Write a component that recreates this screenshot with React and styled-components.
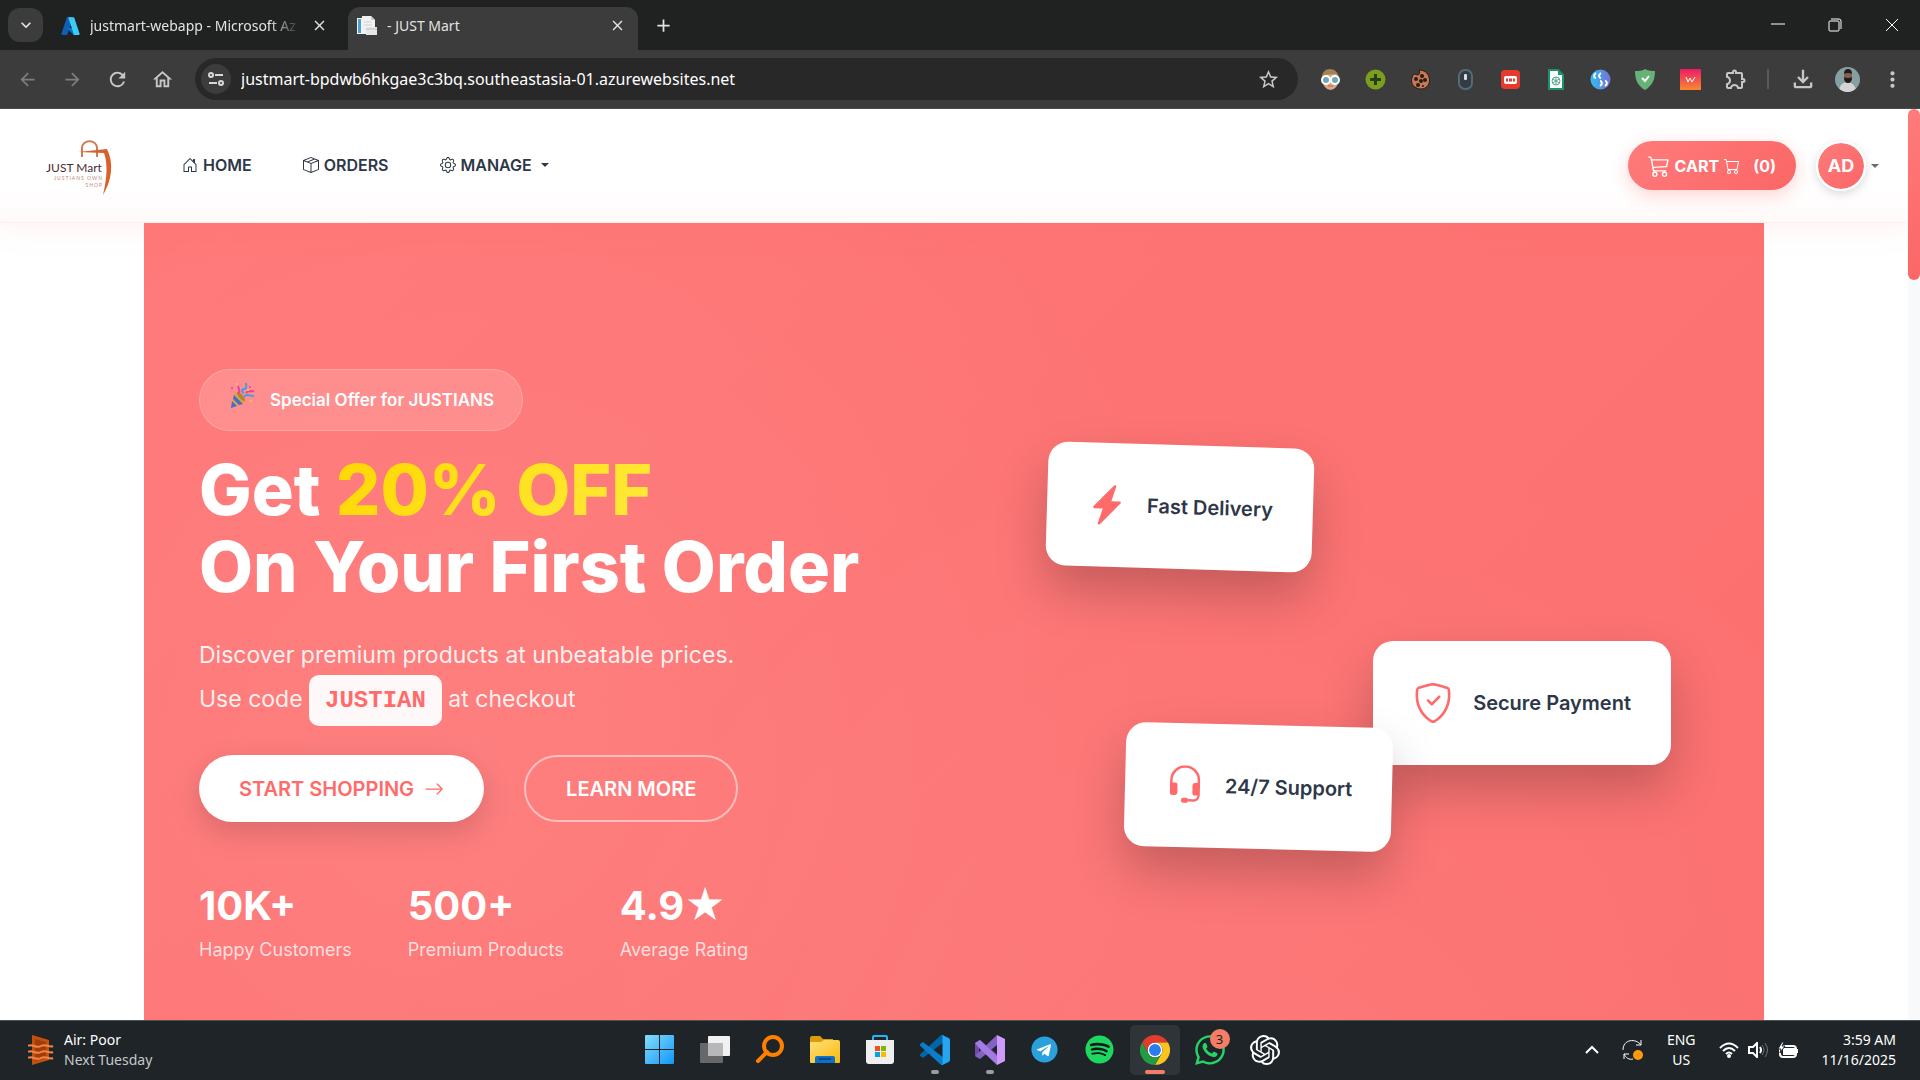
import React from 'react'
import styled, { createGlobalStyle, css } from "styled-components";
import { BsHouseDoor, BsBoxSeam, BsGear, BsCart3, BsCart, BsArrowRight, BsLightningChargeFill, BsShieldCheck, BsHeadset } from "react-icons/bs";
import { FaTelegram, FaWhatsapp, FaSpotify } from "react-icons/fa";
import { SiOpenai } from "react-icons/si";
import { MdArrowBack, MdArrowForward, MdRefresh, MdOutlineHome, MdStarBorder, MdOutlineExtension, MdOutlineFileDownload, MdMoreVert, MdClose, MdAdd, MdKeyboardArrowDown } from "react-icons/md";

const GlobalStyle = createGlobalStyle`
  * {
    box-sizing: border-box;
  }
  body {
    margin: 0;
    background: #fff;
    font-family: Inter, "Liberation Sans", sans-serif;
    overflow: hidden;
  }
  button, input {
    font: inherit;
    color: inherit;
    margin: 0;
    padding: 0;
    border: none;
    background: none;
  }
  a {
    color: inherit;
    text-decoration: none;
  }
  svg {
    display: block;
    flex-shrink: 0;
  }
`;

const AzureIcon = () => (
    <svg width="19" height="19" viewBox="0 0 96 96">
        <path d="M33 6h29L32 93a5 5 0 0 1-4 3H6a5 5 0 0 1-4-6L29 9a5 5 0 0 1 4-3z" fill="#0f5fb4" />
        <path d="M72 61H30l27 27a8 8 0 0 0 5 3h24z" fill="#0078d4" />
        <path d="M67 9a5 5 0 0 0-4-3H33a5 5 0 0 1 4 3l27 81a5 5 0 0 1-4 6h30a5 5 0 0 0 4-6z" fill="#3ccbf4" />
    </svg>
)

const PageIcon = () => (
    <svg width="20" height="20" viewBox="0 0 20 20">
        <path d="M0 2h5v16H0z" fill="#f4f6f8" />
        <path d="M1 3h3v14H1z" fill="#4a9fd0" />
        <path d="M5 0h9l4 4v14H5z" fill="#f1f1f1" />
        <path d="M14 0v4h4z" fill="#c9c9c9" />
        <path d="M7 6h8M7 9h8" stroke="#cfd3d6" />
        <path d="M9 11h11v8H9z" fill="#e4e6e8" />
        <path d="M9 13h11" stroke="#bfc4c8" />
    </svg>
)

const TuneIcon = () => (
    <svg width="18" height="18" viewBox="0 0 18 18" fill="none" stroke="#d8d8d8" strokeWidth="2">
        <circle cx="4" cy="5" r="2" /><path d="M8 5h8" />
        <circle cx="14" cy="13" r="2" /><path d="M2 13h8" />
    </svg>
)

const BarIcon = ({ children }) => <svg width="21" height="21" viewBox="0 0 21 21">{children}</svg>

const extensions = [
    {
        name: 'Glasses', icon: <BarIcon>
            <ellipse cx="10.500" cy="11" rx="8" ry="10" fill="#dba98a" />
            <path d="M2 10C1 3 6 0 10 0s9 3 9 10l-3-5-11 1z" fill="#a38355" />
            <circle cx="6" cy="11" r="4" fill="#6fa9b5" stroke="#fff" strokeWidth="2" />
            <circle cx="15" cy="11" r="4" fill="#6fa9b5" stroke="#fff" strokeWidth="2" />
            <path d="M8 17h5" stroke="#b5654c" />
        </BarIcon>
    },
    {
        name: 'Add', icon: <BarIcon>
            <circle cx="10.500" cy="10.500" r="10" fill="#7a9f1c" />
            <path d="M10.500 5v11M5 10.500h11" stroke="#2d3b12" strokeWidth="3" />
        </BarIcon>
    },
    {
        name: 'Cookies', icon: <BarIcon>
            <path d="M9 1c1 3 1 4-1 5-2 0-3-1-4-1-6 8 0 15 7 15 6 0 10-6 8-12-1-4-5-7-10-7z" fill="#c47a55" stroke="#2a1a14" />
            <g fill="#2a1a14"><circle cx="6" cy="10" r="2" /><circle cx="12" cy="7" r="2" /><circle cx="11" cy="12" r="2" /><circle cx="15" cy="11" r="2" /><circle cx="8" cy="16" r="2" /><circle cx="13" cy="17" r="1" /></g>
        </BarIcon>
    },
    {
        name: 'Mouse', icon: <BarIcon>
            <rect x="4" y="1" width="13" height="19" rx="6" fill="#343b42" stroke="#4f6c7d" strokeWidth="2" />
            <rect x="9" y="5" width="3" height="6" rx="1" fill="#d5dde2" />
        </BarIcon>
    },
    {
        name: 'Recorder', icon: <BarIcon>
            <rect x="1" y="1" width="19" height="19" rx="4" fill="#e8392e" />
            <rect x="4" y="7" width="13" height="8" rx="2" fill="#fff" />
            <path d="M6 11h2M9 11h3M13 11h2" stroke="#e8392e" strokeWidth="3" />
        </BarIcon>
    },
    {
        name: 'Exporter', icon: <BarIcon>
            <path d="M4 1h9l5 5v14H4z" fill="#fff" stroke="#1d9468" strokeWidth="2" />
            <path d="M13 1v5h5z" fill="#1d9468" />
            <g fill="none" stroke="#55a98a"><circle cx="11" cy="12" r="4" /><path d="M8 10l6 4M8 14l6-4M11 8v8" /></g>
        </BarIcon>
    },
    {
        name: 'Quotes', icon: <BarIcon>
            <defs><linearGradient id="quote" x1="0" x2="1"><stop offset="0" stopColor="#2fc0ee" /><stop offset="1" stopColor="#7a6fd8" /></linearGradient></defs>
            <circle cx="10.500" cy="10.500" r="10" fill="url(#quote)" />
            <g fill="none" stroke="#fff" strokeWidth="2"><path d="M6 4c-3 2-2 5 0 5M11 4c-3 2-2 5 0 5M10 17c3-2 2-5 0-5M15 17c3-2 2-5 0-5" /></g>
        </BarIcon>
    },
    {
        name: 'Shield', icon: <BarIcon>
            <path d="M10 0c4 2 7 2 10 2 0 9-3 15-10 19C3 17 0 11 0 2c4 0 7 0 10-2z" fill="#67b279" />
            <path d="M7 9l3 3 4-5" fill="none" stroke="#fff" strokeWidth="2" />
        </BarIcon>
    },
    {
        name: 'Wappalyzer', icon: <BarIcon>
            <defs><linearGradient id="wap" x1="0" x2="0" y1="0" y2="1"><stop offset="0" stopColor="#ef1a68" /><stop offset="1" stopColor="#f88a31" /></linearGradient></defs>
            <path d="M0 0h21v21H0z" fill="url(#wap)" />
            <path d="M6 8l2 5 2-4 2 4 3-5" fill="none" stroke="#fff" />
        </BarIcon>
    },
    { name: 'Extensions', icon: <MdOutlineExtension size={24} color="#c7c7c7" /> },
]

const BrandLogo = () => (
    <svg width="68" height="58" viewBox="0 0 68 58">
        <path d="M36 20v-9c0-9 15-9 15 0v9" fill="none" stroke="#cf7a55" strokeWidth="2" />
        <path d="M32 15l29-3c7 14 5 31-4 46 4-17 5-31 1-42z" fill="#d95f2b" />
        <text x="0" y="35" fontSize="12" fontFamily="Lato, sans-serif" fill="#4d2a30">JUST Mart</text>
        <text x="57" y="43" fontSize="5" letterSpacing="1" textAnchor="end" fontFamily="Lato, sans-serif" fill="#b98a7c">JUSTIANS OWN</text>
        <text x="57" y="50" fontSize="5" letterSpacing="1" textAnchor="end" fontFamily="Lato, sans-serif" fill="#b98a7c">SHOP</text>
    </svg>
)

const PartyIcon = () => (
    <svg width="25" height="26" viewBox="0 0 25 26">
        <path d="M5 9l11 10L1 25z" fill="#e0a43c" />
        <path d="M4 12l9 9-4 1-6-6zM2 18l5 5-6 2z" fill="#3f6fd0" />
        <path d="M7 9c3-1 9 6 8 9-3 1-9-6-8-9z" fill="#b9822f" />
        <g fill="none" strokeWidth="2">
            <path d="M9 11c1-4 0-6-1-8" stroke="#e83fa0" />
            <path d="M14 10c-3-1-2-5 1-4 2 0 1-4 1-6" stroke="#3f9fe8" />
            <path d="M14 14c2-4 5-1 10-1" stroke="#3f9fe8" />
            <path d="M16 10c2-3 5-1 8-2" stroke="#e83fa0" />
        </g>
        <g><circle cx="2" cy="5" r="1" fill="#e83fa0" /><circle cx="20" cy="4" r="1" fill="#e83fa0" /><circle cx="7" cy="1" r="1" fill="#f0c84a" /><circle cx="21" cy="18" r="1" fill="#f0c84a" /><circle cx="18" cy="7" r="1" fill="#f0c84a" /></g>
    </svg>
)

const AirIcon = () => (
    <svg width="26" height="30" viewBox="0 0 26 30">
        <path d="M4 0l17 5v20L4 30z" fill="#c4500e" />
        <path d="M7 4l11 3v16L7 26z" fill="#a23c08" />
        <path d="M0 11c4-3 8 3 13 0s8 2 12 0M0 17c4-3 8 3 13 0s8 2 12 0M0 23c4-3 8 3 13 0s8 2 12 0" fill="none" stroke="#f0844a" strokeWidth="2" />
    </svg>
)

const TaskSvg = ({ children, box = 30 }) => <svg width="30" height="30" viewBox={`0 0 ${box} ${box}`}>{children}</svg>

const tasks = [
    {
        name: 'Start', icon: <TaskSvg>
            <defs><linearGradient id="win" x1="0" y1="0" x2="1" y2="1" ><stop offset="0" stopColor="#86dcfb" /><stop offset="1" stopColor="#1098f7" /></linearGradient></defs>
            <path d="M1 0h13v14H0V1q0-1 1-1zM15 0h13q1 0 1 1v13H15zM0 15h14v14H1q-1 0-1-1zM15 15h14v13q0 1-1 1H15z" fill="url(#win)" />
        </TaskSvg>
    },
    {
        name: 'Task view', icon: <TaskSvg>
            <rect x="8" y="1" width="22" height="20" rx="1" fill="#f1f1f1" />
            <rect x="0" y="8" width="23" height="20" rx="1" fill="#66686a" />
            <path d="M8 8h15v13H8z" fill="#b7b8b9" />
        </TaskSvg>
    },
    {
        name: 'Everything', icon: <TaskSvg>
            <circle cx="18" cy="11" r="9" fill="none" stroke="#ff8000" strokeWidth="4" />
            <path d="M12 17L3 26" stroke="#ff8000" strokeWidth="4" strokeLinecap="round" />
        </TaskSvg>
    },
    {
        name: 'File Explorer', icon: <TaskSvg>
            <defs><linearGradient id="fold" x1="0" y1="0" x2="1" y2="1"><stop offset="0" stopColor="#ffe07a" /><stop offset="1" stopColor="#fbb90d" /></linearGradient></defs>
            <path d="M0 3q0-2 2-2h8l3 3h10v6H0z" fill="#dd9b08" />
            <path d="M0 7h11l3-2h14q2 0 2 2v20q0 1-1 1H1q-1 0-1-1z" fill="url(#fold)" />
            <path d="M5 28v-5q0-2 2-2h16q2 0 2 2v5z" fill="#1070c4" />
            <path d="M9 24h12" stroke="#0b4a8c" strokeWidth="2" />
        </TaskSvg>
    },
    {
        name: 'Microsoft Store', icon: <TaskSvg>
            <path d="M8 7V2q0-1 1-1h12q1 0 1 1v5" fill="none" stroke="#27b5ef" strokeWidth="2" />
            <path d="M1 5h28v21q0 3-3 3H4q-3 0-3-3z" fill="#efefef" />
            <path d="M10 11h5v5h-5z" fill="#f04e23" /><path d="M16 11h5v5h-5z" fill="#7cb900" />
            <path d="M10 17h5v5h-5z" fill="#00a2ed" /><path d="M16 17h5v5h-5z" fill="#fdb800" />
        </TaskSvg>
    },
    {
        name: 'Visual Studio Code', open: true, icon: <TaskSvg box={100}>
            <path d="M96.4614 10.7962L75.8569 0.8755C73.4719 -0.2728 70.6217 0.2116 68.75 2.0833L1.2986 63.5832C-0.5157 65.2373 -0.5136 68.0937 1.3031 69.7452L6.8127 74.7537C8.2979 76.1038 10.5347 76.2032 12.1338 74.9905L93.3609 13.3699C96.086 11.3026 100 13.2462 100 16.6667V16.4275C100 14.0265 98.6246 11.8378 96.4614 10.7962Z" fill="#0065a9" />
            <path d="M96.4614 89.2038L75.8569 99.1245C73.4719 100.273 70.6217 99.7884 68.75 97.9167L1.2986 36.4169C-0.5157 34.7627 -0.5136 31.9063 1.3031 30.2548L6.8127 25.2463C8.2979 23.8962 10.5347 23.7968 12.1338 25.0095L93.3609 86.6301C96.086 88.6974 100 86.7538 100 83.3334V83.5726C100 85.9735 98.6246 88.1622 96.4614 89.2038Z" fill="#0a7dca" />
            <path d="M75.8578 99.1263C73.4721 100.274 70.6219 99.7885 68.75 97.9166C71.0564 100.223 75 98.5895 75 95.3278V4.6721C75 1.4104 71.0564 -0.2231 68.75 2.0833C70.6219 0.2114 73.4721 -0.2737 75.8578 0.8736L96.4587 10.7807C98.6234 11.8217 100 14.0112 100 16.4132V83.5871C100 85.9891 98.6234 88.1786 96.4586 89.2196L75.8578 99.1263Z" fill="#26a5f0" />
        </TaskSvg>
    },
    {
        name: 'Visual Studio', open: true, icon: <TaskSvg>
            <path d="M0 8l5-3 18 15v10L4 13v10l-4-2z" fill="#6c4ba8" />
            <path d="M0 21l5 3L22 10V0L4 17z" fill="#8461c5" />
            <path d="M0 8l5-3 17 16v9L4 13z" fill="#a47be0" />
            <path d="M22 0l8 4v22l-8 4z" fill="#cf9bfa" />
        </TaskSvg>
    },
    { name: 'Telegram', icon: <RoundBack $bg="#fff"><FaTelegram size={27} color="#2aa1dc" /></RoundBack> },
    { name: 'Spotify', icon: <RoundBack $bg="#12181b"><FaSpotify size={29} color="#1ed760" /></RoundBack> },
    {
        name: 'Google Chrome', open: true, active: true, icon: <TaskSvg box={48}>
            <circle cx="24" cy="24" r="12" fill="#fff" />
            <path d="M24,12H44.7812a23.9939,23.9939,0,0,0-41.5639.0029L13.6079,30l.0093-.0024A11.9852,11.9852,0,0,1,24,12Z" fill="#e33b2e" />
            <path d="M34.3913,30.0029,24.0007,48A23.994,23.994,0,0,0,44.78,12.0031H23.9989l-.0025.0093A11.985,11.985,0,0,1,34.3913,30.0029Z" fill="#fcc31e" />
            <path d="M13.6086,30.0031,3.218,12.006A23.994,23.994,0,0,0,24.0025,48L34.3931,30.0029l-.0067-.0068a11.9852,11.9852,0,0,1-20.7778.007Z" fill="#249a43" />
            <circle cx="24" cy="24" r="9.500" fill="#2a7af0" />
        </TaskSvg>
    },
    { name: 'WhatsApp', badge: 3, icon: <FaWhatsapp size={34} color="#25d366" /> },
    { name: 'ChatGPT', icon: <SiOpenai size={30} color="#fff" /> },
]

const stats = [
    { value: '10K+', label: 'Happy Customers' },
    { value: '500+', label: 'Premium Products' },
    { value: '4.9★', label: 'Average Rating' },
]

function App() {
    return (
        <Screen>
            <GlobalStyle />
            <TabStrip>
                <TabSearch aria-label="Search tabs"><MdKeyboardArrowDown size={20} /></TabSearch>
                <Tab>
                    <AzureIcon />
                    <TabTitle $fade>justmart-webapp - Microsoft Az</TabTitle>
                    <TabButton aria-label="Close tab"><MdClose size={17} /></TabButton>
                </Tab>
                <Tab $active>
                    <PageIcon />
                    <TabTitle>- JUST Mart</TabTitle>
                    <TabButton aria-label="Close tab"><MdClose size={17} /></TabButton>
                </Tab>
                <NewTab aria-label="New tab"><MdAdd size={21} /></NewTab>
                <WindowControls>
                    <WindowButton aria-label="Minimize"><svg width="14" height="14"><path d="M0 6h14" stroke="#fff" /></svg></WindowButton>
                    <WindowButton aria-label="Restore">
                        <svg width="14" height="14" fill="none" stroke="#fff"><rect x="1" y="3" width="10" height="10" rx="1" /><path d="M3 1h8q2 0 2 2v8" /></svg>
                    </WindowButton>
                    <WindowButton aria-label="Close"><svg width="14" height="14"><path d="M1 1l12 12M13 1L1 13" stroke="#fff" /></svg></WindowButton>
                </WindowControls>
            </TabStrip>
            <Toolbar>
                <ToolButton $dim aria-label="Back"><MdArrowBack size={21} /></ToolButton>
                <ToolButton $dim aria-label="Forward"><MdArrowForward size={21} /></ToolButton>
                <ToolButton aria-label="Reload"><MdRefresh size={23} /></ToolButton>
                <ToolButton aria-label="Home"><MdOutlineHome size={23} /></ToolButton>
                <AddressBar>
                    <SiteInfo aria-label="Site information"><TuneIcon /></SiteInfo>
                    <Address aria-label="Address" defaultValue="justmart-bpdwb6hkgae3c3bq.southeastasia-01.azurewebsites.net" />
                    <Bookmark aria-label="Bookmark"><MdStarBorder size={23} /></Bookmark>
                </AddressBar>
                <Extensions>
                    {extensions.map((ext) => (
                        <ToolButton key={ext.name} aria-label={ext.name}>{ext.icon}</ToolButton>
                    ))}
                </Extensions>
                <Separator />
                <ToolButton aria-label="Downloads"><MdOutlineFileDownload size={28} /></ToolButton>
                <ToolButton aria-label="Profile">
                    <svg width="25" height="25" viewBox="0 0 25 25">
                        <defs><clipPath id="face"><circle cx="12.500" cy="12.500" r="12.500" /></clipPath></defs>
                        <g clipPath="url(#face)">
                            <path d="M0 0h25v25H0z" fill="#86a0a2" />
                            <path d="M4 25q0-9 8-10 9 1 9 10z" fill="#d5d3d6" />
                            <ellipse cx="13" cy="9" rx="4" ry="6" fill="#8a5f4b" />
                            <path d="M9 7q0-5 4-5t4 5q-4-2-8 0zM9 10q4 2 8 0 0 6-4 6t-4-6z" fill="#211c1b" />
                        </g>
                    </svg>
                </ToolButton>
                <ToolButton aria-label="Menu"><MdMoreVert size={25} /></ToolButton>
            </Toolbar>

            <Viewport>
                <Page>
                    <Navbar>
                        <Brand href="#" aria-label="JUST Mart"><BrandLogo /></Brand>
                        <NavLinks>
                            <NavLink href="#"><BsHouseDoor />HOME</NavLink>
                            <NavLink href="#"><BsBoxSeam />ORDERS</NavLink>
                            <NavLink as="button"><BsGear />MANAGE<Caret $wide /></NavLink>
                        </NavLinks>
                        <CartButton>
                            <BsCart3 size={22} />
                            <span>CART</span>
                            <BsCart size={16} />
                            <CartCount>(0)</CartCount>
                        </CartButton>
                        <UserMenu aria-label="Account">
                            <Avatar>AD</Avatar>
                            <Caret />
                        </UserMenu>
                    </Navbar>
                    <Hero>
                        <div>
                            <OfferBadge><PartyIcon />Special Offer for JUSTIANS</OfferBadge>
                            <Title>Get <Highlight>20% OFF</Highlight><br />On Your First Order</Title>
                            <Lead>
                                Discover premium products at unbeatable prices.<br />
                                Use code <Code>JUSTIAN</Code> at checkout
                            </Lead>
                            <Actions>
                                <HeroButton $primary>START SHOPPING <BsArrowRight /></HeroButton>
                                <HeroButton>LEARN MORE</HeroButton>
                            </Actions>
                            <Stats>
                                {stats.map((stat) => (
                                    <div key={stat.label}>
                                        <StatValue>{stat.value}</StatValue>
                                        <StatLabel>{stat.label}</StatLabel>
                                    </div>
                                ))}
                            </Stats>
                        </div>
                        <Floating>
                            <FastCard><BsLightningChargeFill size={40} />Fast Delivery</FastCard>
                            <SecureCard><BsShieldCheck size={40} />Secure Payment</SecureCard>
                            <SupportCard><BsHeadset size={40} />24/7 Support</SupportCard>
                        </Floating>
                    </Hero>
                </Page>
                <ScrollTrack><ScrollThumb /></ScrollTrack>
            </Viewport>

            <Taskbar>
                <Weather>
                    <AirIcon />
                    <div>Air: Poor<br /><Dim>Next Tuesday</Dim></div>
                </Weather>
                <Tasks>
                    {tasks.map((task) => (
                        <Task key={task.name} aria-label={task.name} $active={task.active}>
                            {task.icon}
                            {task.open && <Indicator $active={task.active} />}
                            {task.badge && <TaskBadge>{task.badge}</TaskBadge>}
                        </Task>
                    ))}
                </Tasks>
                <Tray>
                    <svg width="14" height="9" fill="none" stroke="#fff" strokeWidth="2"><path d="M1 8l6-6 6 6" /></svg>
                    <svg width="22" height="22" viewBox="0 0 22 22" fill="none" stroke="#fff">
                        <path d="M1 11C1 0 14-1 19 6M19 1v5h-5M11 20C7 21 4 19 2 15M2 20v-5h5" />
                        <circle cx="16" cy="16" r="5" fill="#ff9a0c" stroke="none" />
                    </svg>
                    <Language>ENG<br />US</Language>
                    <Status aria-label="Network, volume and battery">
                        <svg width="20" height="16" viewBox="0 0 20 16" fill="none" stroke="#fff" strokeWidth="2">
                            <path d="M1 6q9-9 18 0M4 9q6-6 12 0M7 12q3-3 6 0" /><circle cx="10" cy="14" r="1" fill="#fff" />
                        </svg>
                        <svg width="21" height="16" viewBox="0 0 21 16" fill="none" stroke="#fff">
                            <path d="M1 5h4l4-4v14l-4-4H1zM12 5q2 3 0 6" strokeWidth="2" />
                            <path d="M14 3q4 5 0 10M17 1q5 7 0 14" stroke="#70777b" />
                        </svg>
                        <svg width="21" height="16" viewBox="0 0 21 16">
                            <rect x="2" y="4" width="16" height="11" rx="3" fill="none" stroke="#fff" strokeWidth="2" />
                            <path d="M5 6h12v7H5zM18 7h2v4h-2z" fill="#fff" />
                            <path d="M4 0L0 7h3l-1 4 5-7H4l2-4z" fill="#fff" stroke="#1e2428" />
                        </svg>
                    </Status>
                    <Clock>3:59 AM<br />11/16/2025</Clock>
                </Tray>
            </Taskbar>
        </Screen>
    )
}

const coral = 'linear-gradient(135deg, #ff7b7b, #fb6666)';
const systemFont = '"Noto Sans", "Open Sans", sans-serif';

const center = css`
  display: flex;
  align-items: center;
  justify-content: center;
`;

const Screen = styled.div`
  display: flex;
  flex-direction: column;
  height: 100vh;
`;

const TabStrip = styled.div`
  display: flex;
  align-items: flex-end;
  height: 50px;
  flex-shrink: 0;
  padding-left: 8px;
  background: #1f2221;
  color: #e3e3e3;
  font: 14px/20px ${systemFont};
`;

const TabSearch = styled.button`
  ${center}
  width: 35px;
  height: 34px;
  margin-bottom: 8px;
  border-radius: 12px;
  background: #3c3c3c;
`;

const Tab = styled.div`
  display: flex;
  align-items: center;
  gap: 10px;
  width: ${props => props.$active ? '290px' : '305px'};
  height: 43px;
  padding: ${props => props.$active ? '0 12px 6px 9px' : '0 20px 6px 18px'};
  border-radius: 12px 12px 0 0;
  background: ${props => props.$active ? '#3c3c3c' : 'none'};
`;

const TabTitle = styled.span`
  flex: 1;
  white-space: nowrap;
  ${props => props.$fade && css`
    mask-image: linear-gradient(90deg, #000 85%, transparent);
  `}
`;

const TabButton = styled.button`
  ${center}
`;

const NewTab = styled.button`
  ${center}
  width: 34px;
  height: 34px;
  margin: 0 0 8px 8px;
`;

const WindowControls = styled.div`
  display: flex;
  align-self: stretch;
  margin-left: auto;
`;

const WindowButton = styled.button`
  ${center}
  width: 57px;
`;

const Toolbar = styled.div`
  display: flex;
  align-items: center;
  height: 59px;
  flex-shrink: 0;
  padding: 0 5px;
  background: #3c3c3c;
  border-bottom: 1px solid #4a4a4a;
`;

const ToolButton = styled.button`
  ${center}
  width: 45px;
  height: 40px;
  color: ${props => props.$dim ? '#7d7d7d' : '#c7c7c7'};
`;

const AddressBar = styled.div`
  display: flex;
  align-items: center;
  flex: 1;
  height: 42px;
  margin: 0 10px;
  padding: 0 18px 0 6px;
  border-radius: 21px;
  background: #282828;
  color: #c7c7c7;
`;

const SiteInfo = styled.button`
  ${center}
  width: 30px;
  height: 30px;
  border-radius: 50%;
  background: #3c3c3c;
`;

const Address = styled.input`
  flex: 1;
  margin-left: 10px;
  color: #fff;
  font: 16px/24px ${systemFont};
  outline: none;
`;

const Bookmark = styled.button`
  ${center}
`;

const Extensions = styled.div`
  display: flex;
`;

const Separator = styled.div`
  width: 2px;
  height: 20px;
  margin: 0 11px 0 9px;
  background: #5a5a5a;
`;

const Viewport = styled.div`
  display: flex;
  flex: 1;
  min-height: 0;
  overflow: hidden;
`;

const Page = styled.div`
  flex: 1;
  overflow: hidden;
  background: #fff;
`;

const ScrollTrack = styled.div`
  width: 12px;
  background: #f8f9fa;
`;

const ScrollThumb = styled.div`
  height: 171px;
  border-radius: 6px;
  background: ${coral};
`;

const Navbar = styled.nav`
  position: relative;
  z-index: 1;
  display: flex;
  align-items: center;
  height: 114px;
  padding: 0 29px 0 46px;
  background: linear-gradient(#fff 70%, #fffafa);
  border-bottom: 1px solid #fff0f0;
  box-shadow: 0 4px 30px rgba(255, 107, 107, 0.1);
`;

const Brand = styled.a`
  margin-right: 68px;
`;

const NavLinks = styled.div`
  display: flex;
  gap: 51px;
  margin-right: auto;
  padding-bottom: 2px;
`;

const NavLink = styled.a`
  display: flex;
  align-items: center;
  gap: 5px;
  color: #2d3748;
  font-size: 16px;
  font-weight: 600;
  line-height: 24px;
`;

const Caret = styled.span`
  margin-left: ${props => props.$wide ? '4px' : '5px'};
  border: 4px solid transparent;
  border-top-color: currentColor;
  border-bottom: 0;
`;

const CartButton = styled.button`
  display: flex;
  align-items: center;
  gap: 5px;
  height: 49px;
  padding: 0 20px;
  border-radius: 25px;
  background: ${coral};
  box-shadow: 0 5px 18px rgba(255, 107, 107, 0.3);
  color: #fff;
  font-size: 16px;
  font-weight: 700;
`;

const CartCount = styled.span`
  margin-left: 8px;
`;

const UserMenu = styled.button`
  display: flex;
  align-items: center;
  margin-left: 20px;
  color: #6c6c6c;
`;

const Avatar = styled.span`
  ${center}
  width: 50px;
  height: 50px;
  border: 2px solid #fff;
  border-radius: 50%;
  background: ${coral} border-box;
  background-clip: padding-box;
  box-shadow: 0 3px 10px rgba(0, 0, 0, 0.15);
  color: #fff;
  font-size: 18px;
  font-weight: 700;
`;

const Hero = styled.section`
  display: grid;
  grid-template-columns: 1fr 1fr;
  max-width: 1620px;
  min-height: 100vh;
  align-items: start;
  margin: 0 auto;
  padding: 146px 55px;
  background:
    radial-gradient(circle at 20% 50%, rgba(255, 255, 255, 0.08), transparent 55%),
    radial-gradient(circle at 70% 85%, rgba(255, 255, 255, 0.06), transparent 50%),
    linear-gradient(135deg, #ff7777, #fb6e6e);
  color: #fff;
`;

const OfferBadge = styled.div`
  display: inline-flex;
  align-items: center;
  gap: 15px;
  height: 62px;
  padding: 0 28px 0 30px;
  border: 1px solid rgba(255, 255, 255, 0.2);
  border-radius: 31px;
  background: rgba(255, 255, 255, 0.15);
  font-size: 17px;
  font-weight: 600;

  svg {
    margin-bottom: 8px;
  }
`;

const Title = styled.h1`
  margin: 20px 0 28px;
  font-size: 70px;
  font-weight: 800;
  line-height: 77px;
`;

const Highlight = styled.span`
  background: linear-gradient(135deg, #ffd700, #ffeb3b);
  background-clip: text;
  color: transparent;
`;

const Lead = styled.p`
  margin: 0 0 32px;
  color: rgba(255, 255, 255, 0.9);
  font-size: 23px;
  line-height: 44px;
`;

const Code = styled.code`
  padding: 12px 16px;
  border-radius: 10px;
  background: rgba(255, 255, 255, 0.95);
  color: #ff6b6b;
  font-family: "Courier New", "Liberation Mono", monospace;
  font-size: 24px;
  font-weight: 700;
`;

const Actions = styled.div`
  display: flex;
  gap: 40px;
  margin-bottom: 60px;
`;

const HeroButton = styled.button`
  display: flex;
  align-items: center;
  gap: 10px;
  height: 67px;
  padding: 0 40px;
  border: 2px solid rgba(255, 255, 255, 0.5);
  border-radius: 34px;
  font-size: 20px;
  font-weight: 600;
  ${props => props.$primary && css`
    border: none;
    background: #fff;
    color: #ff6b6b;
    box-shadow: 0 10px 30px rgba(0, 0, 0, 0.15);
  `}
`;

const Stats = styled.div`
  display: flex;
  gap: 56px;
`;

const StatValue = styled.div`
  margin-bottom: 6px;
  font-size: 40px;
  font-weight: 700;
  line-height: 48px;
`;

const StatLabel = styled.div`
  color: rgba(255, 255, 255, 0.75);
  font-size: 18px;
  line-height: 27px;
`;

// cards float freely over the right half of the hero
const Floating = styled.div`
  position: relative;
  height: 594px;
`;

const FloatCard = styled.div`
  position: absolute;
  display: flex;
  align-items: center;
  gap: 20px;
  padding: 42px 40px;
  border-radius: 20px;
  background: #fff;
  box-shadow: 0 25px 50px rgba(0, 0, 0, 0.22);
  color: #2d3748;
  font-size: 20px;
  font-weight: 600;
  white-space: nowrap;

  svg {
    color: #ff6b6b;
  }
`;

const FastCard = styled(FloatCard)`
  top: 76px;
  left: 93px;
  transform: rotate(1.7deg);
`;

const SecureCard = styled(FloatCard)`
  top: 272px;
  right: 38px;
`;

const SupportCard = styled(FloatCard)`
  top: 356px;
  left: 171px;
  transform: rotate(1.4deg);
`;

const Taskbar = styled.footer`
  display: grid;
  grid-template-columns: 1fr auto 1fr;
  align-items: center;
  height: 60px;
  flex-shrink: 0;
  padding: 0 24px 2px 28px;
  border-top: 1px solid #4b5154;
  background: #1e2428;
  color: #fff;
  font: 14px/20px ${systemFont};
`;

const Weather = styled.div`
  display: flex;
  align-items: center;
  gap: 10px;
`;

const Dim = styled.span`
  color: #c5c8ca;
`;

const Tasks = styled.div`
  display: flex;
  gap: 5px;
`;

const Task = styled.button`
  ${center}
  position: relative;
  width: 50px;
  height: 50px;
  border-radius: 5px;
  background: ${props => props.$active ? '#2e3438' : 'none'};
`;

const Indicator = styled.span`
  position: absolute;
  bottom: 1px;
  left: 50%;
  width: ${props => props.$active ? '20px' : '8px'};
  height: 4px;
  border-radius: 2px;
  background: ${props => props.$active ? '#f47e65' : '#9a9da0'};
  transform: translateX(-50%);
`;

const TaskBadge = styled.span`
  ${center}
  position: absolute;
  top: 4px;
  right: 5px;
  width: 20px;
  height: 20px;
  border-radius: 50%;
  background: #f47e65;
  color: #1b1b1b;
  font-size: 13px;
`;

// fills the cut-out glyph of a round brand icon
function RoundBack({ $bg, children }) {
    return <RoundFill $bg={$bg}>{children}</RoundFill>
}

const RoundFill = styled.span`
  ${center}
  border-radius: 50%;
  background: radial-gradient(${props => props.$bg} 60%, transparent 62%);
`;

const Tray = styled.div`
  display: flex;
  align-items: center;
  justify-content: flex-end;
  gap: 23px;
`;

const Language = styled.div`
  text-align: center;
`;

const Status = styled.button`
  display: flex;
  align-items: center;
  gap: 9px;
`;

const Clock = styled.div`
  text-align: right;
`;

export default App
